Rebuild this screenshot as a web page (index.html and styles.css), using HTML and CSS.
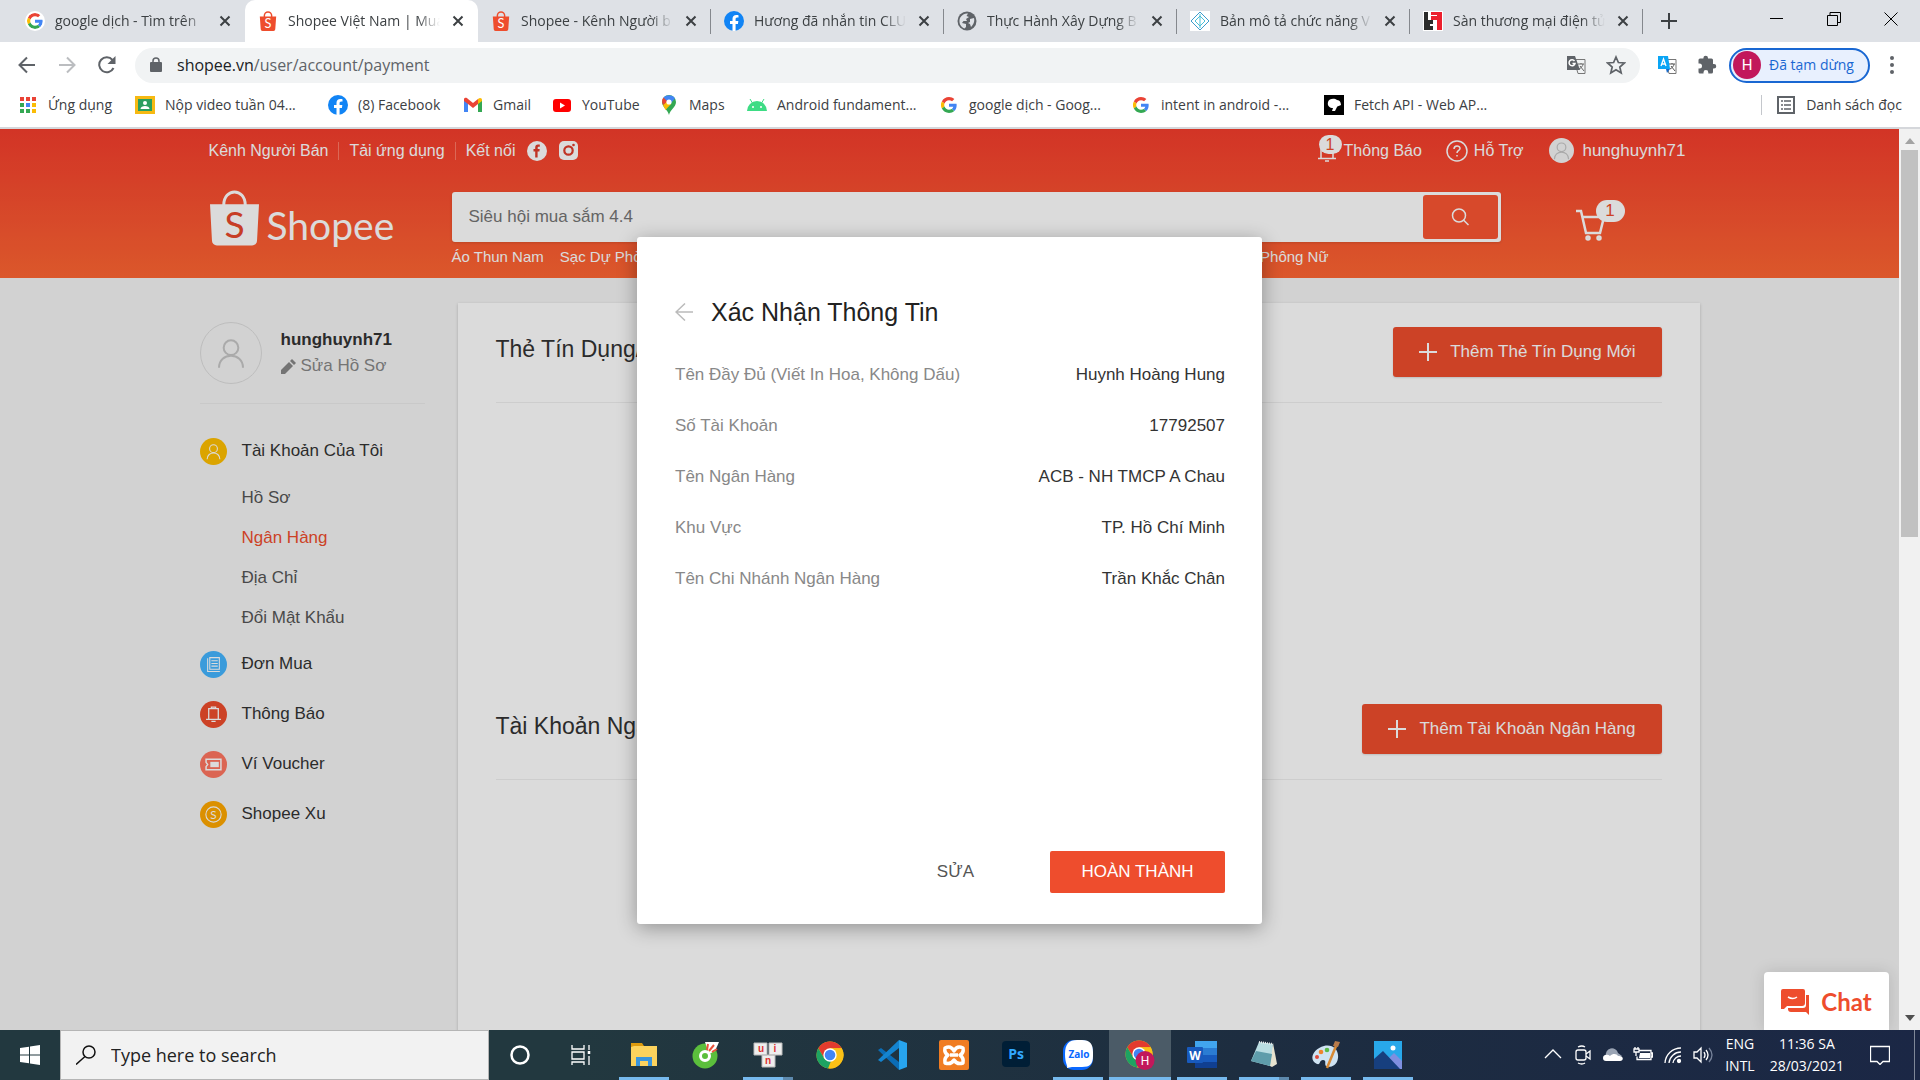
FILE: index.html
```html
<!DOCTYPE html>
<html lang="vi">
<head>
<meta charset="utf-8">
<title>Shopee Việt Nam</title>
<link rel="stylesheet" href="styles.css">
</head>
<body>
<svg class="sprite" aria-hidden="true">
  <symbol id="google" viewBox="0 0 48 48"><path fill="#ea4335" d="M24 9.5c3.5 0 6.700 1.200 9.200 3.600l6.900-6.900C35.900 2.400 30.500 0 24 0 14.600 0 6.500 5.400 2.600 13.200l8 6.200C12.400 13.700 17.700 9.500 24 9.500z"/><path fill="#4285f4" d="M47 24.500c0-1.600-.2-3.100-.4-4.500H24v9h12.900c-.6 3-2.200 5.500-4.800 7.200l7.700 6C44.400 38 47 31.900 47 24.500z"/><path fill="#fbbc05" d="M10.500 28.600A14.500 14.500 0 0 1 10.500 19.400l-8-6.200a24 24 0 0 0 0 21.600z"/><path fill="#34a853" d="M24 48c6.500 0 12-2.100 15.900-5.800l-7.700-6c-2.200 1.500-4.900 2.300-8.200 2.300-6.300 0-11.600-4.200-13.500-9.900l-8 6.200C6.500 42.600 14.600 48 24 48z"/></symbol>
  <symbol id="facebook" viewBox="0 0 24 24"><circle cx="12" cy="12" r="12" fill="#1184f5"/><path fill="#fff" d="M16.700 15.500l.5-3.500h-3.300V9.800c0-1 .5-1.900 2-1.900h1.500V5s-1.400-.2-2.700-.2c-2.700 0-4.500 1.600-4.500 4.600V12h-3v3.500h3V24h3.700v-8.500z"/></symbol>
  <symbol id="globe" viewBox="0 0 20 20"><circle cx="10" cy="10" r="9.500" fill="#5f6368"/><path fill="#dee1e6" d="M3 7c2-4 6-5 8-4.500L9.500 5 12 6l-3 2 1 2H6.500L5 12l4 1v3l-1.500 1.500C3 16 1.500 11 3 7zM13 8l4-1c1 4-1 7-3 9l-1-3-2-1 2-1z"/></symbol>
  <symbol id="diamond" viewBox="0 0 20 20"><path fill="#fff" d="M0 0h20v20H0z"/><g fill="none" stroke="#3d9ccc"><path d="M10 1l9 9-9 9-9-9z"/><path stroke="#48c0d8" d="M10 5l5 5-5 5-5-5zM10 3v14"/></g></symbol>
  <symbol id="hh" viewBox="0 0 20 20"><path fill="#fff" d="M0 0h20v20H0z"/><path fill="#2b2b2b" d="M1 1h4v8h5v4H7v2h3v4H1z"/><path fill="#ec1f2d" d="M8 1h11v18h-5V9H8V5h6V4H8z"/></symbol>
  <symbol id="close" viewBox="0 0 12 12"><path d="M1.500 1.500l9 9m0-9l-9 9" stroke="#3c4043" stroke-width="2"/></symbol>
  <symbol id="user" viewBox="0 0 24 24"><g fill="none" stroke="currentColor" stroke-width="1.500"><circle cx="12" cy="8" r="5.500"/><path d="M3 23c0-12 18-12 18 0"/></g></symbol>
  <symbol id="chrome" viewBox="0 0 28 28"><circle cx="14" cy="14" r="13.500" fill="#fbc116"/><path fill="#e33b2e" d="M2.300 7.200a13.500 13.500 0 0 1 23.400 0H14L8 17z"/><path fill="#1da362" d="M2.300 7.200l6 10.300L15 20l-3 7.400A13.500 13.500 0 0 1 2.300 7.200z"/><path fill="#fbc116" d="M14 7.300h11.700A13.500 13.500 0 0 1 12.500 27.400L19 17z"/><circle cx="14" cy="14" r="6.700" fill="#fff"/><circle cx="14" cy="14" r="5.300" fill="#4285f4"/></symbol>
</svg>

<header class="browser">
  <div class="tabstrip">
    <div class="tab"><svg class="fav round"><use href="#google"/></svg><span class="tab-title">google dịch - Tìm trên</span><button class="x" aria-label="Đóng"><svg><use href="#close"/></svg></button></div>
    <div class="tab active"><svg class="fav" viewBox="0 0 20 22"><path fill="none" stroke="#ee4d2d" stroke-width="1.600" d="M6 7V5a4 4 0 0 1 8 0v2"/><path fill="#ee4d2d" d="M1 6h18l-1 14a2 2 0 0 1-2 2H4a2 2 0 0 1-2-2z"/><text x="10" y="19" text-anchor="middle" font-size="14" font-family="Lato" fill="#fff">S</text></svg><span class="tab-title">Shopee Việt Nam | Mua</span><button class="x" aria-label="Đóng"><svg><use href="#close"/></svg></button></div>
    <div class="tab"><svg class="fav" viewBox="0 0 20 22"><path fill="none" stroke="#ee4d2d" stroke-width="1.600" d="M6 7V5a4 4 0 0 1 8 0v2"/><path fill="#ee4d2d" d="M1 6h18l-1 14a2 2 0 0 1-2 2H4a2 2 0 0 1-2-2z"/><text x="10" y="19" text-anchor="middle" font-size="14" font-family="Lato" fill="#fff">S</text></svg><span class="tab-title">Shopee - Kênh Người b</span><button class="x" aria-label="Đóng"><svg><use href="#close"/></svg></button></div>
    <div class="tab"><svg class="fav"><use href="#facebook"/></svg><span class="tab-title">Hương đã nhắn tin CLU</span><button class="x" aria-label="Đóng"><svg><use href="#close"/></svg></button></div>
    <div class="tab"><svg class="fav"><use href="#globe"/></svg><span class="tab-title">Thực Hành Xây Dựng B</span><button class="x" aria-label="Đóng"><svg><use href="#close"/></svg></button></div>
    <div class="tab"><svg class="fav"><use href="#diamond"/></svg><span class="tab-title">Bản mô tả chức năng V</span><button class="x" aria-label="Đóng"><svg><use href="#close"/></svg></button></div>
    <div class="tab"><svg class="fav"><use href="#hh"/></svg><span class="tab-title">Sàn thương mại điện tử</span><button class="x" aria-label="Đóng"><svg><use href="#close"/></svg></button></div>
    <button class="newtab" aria-label="Thẻ mới"><svg width="16" height="16"><path d="M8 0v16M0 8h16" stroke="#3c4043" stroke-width="2"/></svg></button>
    <div class="winctl">
      <button aria-label="Thu nhỏ"><svg width="14" height="14"><path d="M0 6.500h13" stroke="#000"/></svg></button>
      <button aria-label="Khôi phục"><svg width="14" height="14" fill="none" stroke="#000"><path d="M.5 3.500h10v10H.5zM3 3V.5h10.500v10H11"/></svg></button>
      <button aria-label="Đóng cửa sổ"><svg width="14" height="14"><path d="M.5.5l13 13m0-13l-13 13" stroke="#000"/></svg></button>
    </div>
  </div>
  <div class="toolbar">
    <button aria-label="Quay lại"><svg width="18" height="18" fill="none" stroke="#5f6368" stroke-width="2"><path d="M17 9H2M9 1.500L1.500 9 9 16.500"/></svg></button>
    <button aria-label="Tiến"><svg width="18" height="18" fill="none" stroke="#bbbdc0" stroke-width="2"><path d="M1 9h15M9 1.500L16.500 9 9 16.500"/></svg></button>
    <button aria-label="Tải lại"><svg width="18" height="18"><path fill="none" stroke="#5f6368" stroke-width="2" d="M15.500 12A7.500 7.500 0 1 1 14.500 4"/><path fill="#5f6368" d="M17.500 0v8h-8z"/></svg></button>
    <div class="omnibox">
      <svg width="12" height="16"><path fill="none" stroke="#5f6368" stroke-width="1.500" d="M3 7V4a3 3 0 0 1 6 0v3"/><rect y="5" width="12" height="10" rx="1" fill="#5f6368"/></svg>
      <span class="url"><b>shopee.vn</b>/user/account/payment</span>
      <svg class="i20" viewBox="0 0 20 20"><path fill="#f1f3f4" stroke="#777" d="M8 4.500h11v14h-7z"/><path fill="none" stroke="#666" d="M12 9h6M15 8v1M17 9c0 2-2 4-4 5M14 11l4 5"/><path fill="#5f6368" d="M1 1h8l5 14H1z"/><path fill="none" stroke="#fff" stroke-width="1.500" d="M8.500 6A3 3 0 1 0 9 8.500H6.500"/></svg>
      <svg width="20" height="20" viewBox="0 0 20 20"><path fill="none" stroke="#5f6368" stroke-width="1.700" d="M10 2l2.400 5.500 6 .5-4.600 4 1.400 6-5.200-3.200L4.800 18l1.400-6L1.600 8l6-.5z"/></svg>
    </div>
    <svg class="i20 ext-translate" viewBox="0 0 20 20"><path fill="#fff" stroke="#777" d="M8 4.500h11v14h-7z"/><path fill="none" stroke="#555" d="M12 9h6M15 8v1M17 9c0 2-2 4-4 5M14 11l4 5"/><path fill="#0aa5f5" d="M1 1h10l2 13H1z"/><path fill="#1668c8" d="M9 14h4l-3 4z"/><path fill="none" stroke="#fff" stroke-width="1.300" d="M4 11l2.500-7L9 11M5 9h3"/></svg>
    <svg width="20" height="20" viewBox="0 0 20 20" class="ext"><path fill="#5f6368" d="M17 9h-1V5a1.500 1.500 0 0 0-1.500-1.500H11V3a2.300 2.300 0 0 0-4.600 0v.5H3A1.500 1.500 0 0 0 1.500 5v3.500h1a2.500 2.500 0 0 1 0 5h-1V17A1.500 1.500 0 0 0 3 18.500h3.500v-1a2.400 2.400 0 0 1 4.800 0v1h3.200A1.500 1.500 0 0 0 16 17v-3.500h1A2.250 2.250 0 0 0 17 9z"/></svg>
    <button class="profile"><span class="ava">H</span>Đã tạm dừng</button>
    <svg width="6" height="20" class="dots" fill="#5f6368"><circle cx="3" cy="3" r="2"/><circle cx="3" cy="10" r="2"/><circle cx="3" cy="17" r="2"/></svg>
  </div>
  <nav class="bookmarks">
    <a href="#"><svg viewBox="0 0 20 20"><path fill="#ea4335" d="M2 2h4v4H2zM8 2h4v4H8zM14 2h4v4h-4z"/><path fill="#34a853" d="M2 8h4v4H2zM2 14h4v4H2z"/><path fill="#4285f4" d="M8 8h4v4H8z"/><path fill="#34a853" d="M8 14h4v4H8z"/><path fill="#fbbc05" d="M14 8h4v4h-4zM14 14h4v4h-4z"/></svg>Ứng dụng</a>
    <a href="#"><svg viewBox="0 0 20 20"><path fill="#f6b912" d="M0 1h20v18H0z"/><path fill="#2b9e5e" d="M3 4h14v12H3z"/><circle cx="10" cy="8" r="2" fill="#fff"/><path fill="#fff" d="M5.500 14c0-4 9-4 9 0z"/></svg>Nộp video tuần 04...</a>
    <a href="#"><svg><use href="#facebook"/></svg>(8) Facebook</a>
    <a href="#"><svg viewBox="0 0 20 20"><path fill="#4285f4" d="M1 5l4 3v9H1z"/><path fill="#34a853" d="M15 8l4-3v12h-4z"/><path fill="#ea4335" d="M1 4c1-2 3-1 4 0l5 4 5-4v5l-5 4-5-4-4-3z"/><path fill="#fbbc05" d="M15 4c2-2 4-1 4 1v1l-4 3z"/></svg>Gmail</a>
    <a href="#"><svg viewBox="0 0 20 20"><rect x="1" y="4" width="18" height="13" rx="3" fill="#f00"/><path fill="#fff" d="M8 7.500v6l5-3z"/></svg>YouTube</a>
    <a href="#"><svg viewBox="0 0 20 20"><path fill="#34a853" d="M10 20C9 15 3 12 3 7a7 7 0 0 1 14 0c0 5-6 8-7 13z"/><path fill="#fbbc05" d="M4 10l5-5 3 4-5.500 6z"/><path fill="#ea4335" d="M4.500 2.500L9 6l-5 4C2.500 7 3 4 4.500 2.500z"/><path fill="#4285f4" d="M4.500 2.500C8-1 14 0 16 3.500L12 8 8 6z"/><circle cx="10" cy="7" r="2.600" fill="#fff"/></svg>Maps</a>
    <a href="#"><svg viewBox="0 0 20 20"><path fill="#3ddc84" d="M0 16a10 10 0 0 1 20 0z"/><path stroke="#3ddc84" d="M3 4l3 5M17 4l-3 5"/><circle cx="6" cy="12" r="1" fill="#fff"/><circle cx="14" cy="12" r="1" fill="#fff"/></svg>Android fundament...</a>
    <a href="#"><svg class="sm"><use href="#google"/></svg>google dịch - Goog...</a>
    <a href="#"><svg class="sm"><use href="#google"/></svg>intent in android -...</a>
    <a href="#"><svg viewBox="0 0 20 20"><path d="M0 0h20v20H0z"/><path fill="#fff" d="M4 7c1-4 7-4 9-2 3 0 4 3 4 5-1 1-4 1-4 2l-2 4H8l1-3c-3 0-6-2-5-6z"/></svg>Fetch API - Web AP...</a>
    <a href="#" class="reading"><svg viewBox="0 0 20 20"><path fill="none" stroke="#5f6368" stroke-width="2" d="M2 2h16v16H2z"/><path stroke="#5f6368" stroke-width="1.500" d="M5 6h2M8 6h7M5 10h2M8 10h7M5 14h2M8 14h7"/></svg>Danh sách đọc</a>
  </nav>
</header>

<main class="viewport">
  <div class="page">
    <header class="head">
      <div class="wrap">
        <nav class="topnav">
          <a href="#">Kênh Người Bán</a><i></i><a href="#">Tải ứng dụng</a><i></i><span>Kết nối</span>
          <a href="#" class="soc" aria-label="Facebook"><svg width="20" height="20"><circle cx="10" cy="10" r="10" fill="#fff"/><path fill="#e03c2b" d="M8.200 16.500v-6H6.500V8h1.700V6.500c0-2 1-3 2.800-3h1.800v2.300h-1.200c-.7 0-.9.3-.9 1V8h2l-.3 2.500h-1.800v6z"/></svg></a>
          <a href="#" class="soc" aria-label="Instagram"><svg width="20" height="20"><rect width="19" height="19" rx="5" fill="#fff"/><circle cx="9.500" cy="9.500" r="4.200" fill="none" stroke="#e03c2b" stroke-width="2.200"/><circle cx="14.500" cy="4" r="1.300" fill="#e03c2b"/></svg></a>
          <a href="#" class="bell"><svg width="20" height="24" fill="none" stroke="#fff" stroke-width="1.500"><path d="M4 19V9a6 6 0 0 1 12 0v10M1 19.500h18M8 22h4"/></svg><b class="badge">1</b>Thông Báo</a>
          <a href="#" class="help"><svg width="22" height="22" fill="none" stroke="#fff" stroke-width="1.500"><circle cx="11" cy="11" r="10"/><path d="M8 9c0-4 6-4 6-.5 0 2-3 2-3 4.500M11 15v1.500"/></svg>Hỗ Trợ</a>
          <a href="#" class="me"><span class="mini"><svg><use href="#user"/></svg></span>hunghuynh71</a>
        </nav>
        <div class="searchrow">
          <a href="#" class="logo"><svg width="49" height="56" viewBox="0 0 50 56"><path fill="none" stroke="#fff" stroke-width="3" d="M14 15C14-3 36-3 36 15"/><path fill="#fff" d="M0 14h50l-2 37a5 5 0 0 1-5 5H7a5 5 0 0 1-5-5z"/><text x="25" y="48" text-anchor="middle" font-family="Lato" font-size="38" fill="#e8482c">S</text></svg><span>Shopee</span></a>
          <form class="search"><input type="text" placeholder="Siêu hội mua sắm 4.4" aria-label="Tìm kiếm"><button type="button" aria-label="Tìm"><svg width="18" height="18" fill="none" stroke="#fff" stroke-width="1.500"><circle cx="8" cy="7.500" r="6.500"/><path d="M12.500 12l5 5"/></svg></button></form>
          <a href="#" class="cart" aria-label="Giỏ hàng"><svg width="30" height="32" fill="none" stroke="#fff" stroke-width="2.500"><path d="M0 2h5l5 22h14l4-16H7"/><circle cx="12" cy="29" r="1.500"/><circle cx="23" cy="29" r="1.500"/></svg><b class="badge">1</b></a>
        </div>
        <nav class="hints"><a href="#">Áo Thun Nam</a><a href="#">Sạc Dự Phòng</a><a href="#" class="last">Phông Nữ</a></nav>
      </div>
    </header>
    <div class="wrap body">
      <aside class="side">
        <div class="who"><span class="avatar"><svg><use href="#user"/></svg></span><div><b>hunghuynh71</b><a href="#"><svg width="15" height="15" fill="#888"><path d="M0 15v-4l8-8 4 4-8 8zM9 2l2-2 4 4-2 2z"/></svg>Sửa Hồ Sơ</a></div></div>
        <nav class="menu">
          <a href="#"><span class="ic yellow"><svg><use href="#user"/></svg></span>Tài Khoản Của Tôi</a>
          <div class="sub"><a href="#">Hồ Sơ</a><a href="#" class="on">Ngân Hàng</a><a href="#">Địa Chỉ</a><a href="#">Đổi Mật Khẩu</a></div>
          <a href="#"><span class="ic sky"><svg viewBox="0 0 16 16" fill="none" stroke="#fff"><path d="M4.500 1.500h9v11h-9zM2.500 2v12.500H14M6 4.500h6M6 7h6M6 9.500h6"/></svg></span>Đơn Mua</a>
          <a href="#"><span class="ic red"><svg viewBox="0 0 16 16" fill="none" stroke="#fff" stroke-width="1.200"><path d="M3.500 12V2.500h9V12M1 12.500h14M6 14.500h4M6 2V1h4v1"/></svg></span>Thông Báo</a>
          <a href="#"><span class="ic pink"><svg viewBox="0 0 16 16"><path fill="none" stroke="#fff" stroke-width="1.400" d="M1 3h14v10H1v-3l1.500-2L1 6z"/><path fill="#fff" d="M5 5.500h8v5H5z"/></svg></span>Ví Voucher</a>
          <a href="#"><span class="ic gold"><svg viewBox="0 0 16 16"><circle cx="8" cy="8" r="7.200" fill="none" stroke="#fff"/><text x="8" y="12" text-anchor="middle" font-family="Lato" font-size="11" fill="#fff">S</text></svg></span>Shopee Xu</a>
        </nav>
      </aside>
      <section class="panel">
        <div class="block"><h2>Thẻ Tín Dụng/Ghi Nợ</h2><button class="add"><svg width="18" height="18"><path d="M9 0v18M0 9h18" stroke="#fff" stroke-width="2"/></svg>Thêm Thẻ Tín Dụng Mới</button></div>
        <div class="block"><h2>Tài Khoản Ngân Hàng</h2><button class="add"><svg width="18" height="18"><path d="M9 0v18M0 9h18" stroke="#fff" stroke-width="2"/></svg>Thêm Tài Khoản Ngân Hàng</button></div>
      </section>
    </div>
    <div class="overlay">
      <div class="modal" role="dialog" aria-labelledby="dlg">
        <div class="mtitle"><button aria-label="Trở lại"><svg width="18" height="18" fill="none" stroke="#bbb" stroke-width="1.500"><path d="M18 9H1M10 .5L1 9l9 8.500"/></svg></button><h1 id="dlg">Xác Nhận Thông Tin</h1></div>
        <dl>
          <div><dt>Tên Đầy Đủ (Viết In Hoa, Không Dấu)</dt><dd>Huynh Hoàng Hung</dd></div>
          <div><dt>Số Tài Khoản</dt><dd>17792507</dd></div>
          <div><dt>Tên Ngân Hàng</dt><dd>ACB - NH TMCP A Chau</dd></div>
          <div><dt>Khu Vực</dt><dd>TP. Hồ Chí Minh</dd></div>
          <div><dt>Tên Chi Nhánh Ngân Hàng</dt><dd>Trần Khắc Chân</dd></div>
        </dl>
        <div class="actions"><button class="edit">SỬA</button><button class="done">HOÀN THÀNH</button></div>
      </div>
    </div>
    <button class="chat"><svg width="28" height="26" viewBox="0 0 28 26"><path fill="#ee4d2d" d="M2 0h20a2 2 0 0 1 2 2v12a3 3 0 0 1-3 3H6l-3 3H0V2a2 2 0 0 1 2-2zM25 6h3v20l-3-3H10a3 3 0 0 1-3-3v-1h15a3 3 0 0 0 3-3z"/><path fill="none" stroke="#fff" stroke-width="1.500" d="M7 8q5 3 9 0"/></svg>Chat</button>
  </div>
  <div class="scroll"><svg width="10" height="6"><path fill="#a3a3a3" d="M0 6l5-6 5 6z"/></svg><span></span><svg width="10" height="6"><path fill="#505050" d="M0 0l5 6 5-6z"/></svg></div>
</main>

<footer class="taskbar">
  <button class="start" aria-label="Start"><svg width="20" height="20" fill="#fff"><path d="M0 3l9-1.300V9.500H0zM10 1.500L20 0v9.500H10zM0 10.500h9v7.800L0 17zM10 10.500h10V20l-10-1.500z"/></svg></button>
  <label class="tsearch"><svg width="20" height="20" fill="none" stroke="#111" stroke-width="1.500"><circle cx="13" cy="7" r="6"/><path d="M9 11.500L0 19.500"/></svg><input type="text" placeholder="Type here to search" aria-label="Type here to search"></label>
  <div class="apps">
    <button aria-label="Cortana"><svg viewBox="0 0 30 30"><circle cx="15" cy="15" r="8.500" fill="none" stroke="#fff" stroke-width="2.500"/></svg></button>
    <button aria-label="Task View"><svg viewBox="0 0 30 30" fill="none" stroke="#fff" stroke-width="1.300"><path d="M5 5v4h12V5M5 12h12v7H5zM5 25v-3h12v3M22 5v5M22 16v9"/><path stroke-width="2.500" d="M22 11v3"/></svg></button>
    <button class="run" aria-label="File Explorer"><svg viewBox="0 0 30 30"><path fill="#dd9a0e" d="M2 3h11l2 3v5H2z"/><path fill="#fdd35d" d="M2 7l3-1h23v20H2z"/><path fill="#3b96dd" d="M7 26V17h16v9h-4v-5h-8v5z"/></svg></button>
    <button aria-label="Cốc Cốc"><svg viewBox="0 0 30 30"><circle cx="14" cy="16" r="12.500" fill="#5bbf3c"/><circle cx="14" cy="16" r="4.500" fill="none" stroke="#fff" stroke-width="3"/><path fill="#fff" d="M14 2h14l-4 9-6 3z"/><path stroke="#e9533b" stroke-width="2" d="M17 4l-1 6M23 5l-5 6M26 9l-5 3"/></svg></button>
    <button class="run multi" aria-label="UniKey"><svg viewBox="0 0 30 30"><g fill="#eee" stroke="#bbb"><path d="M1 3h13v12H1zM16 3h13v12H16zM9 15h13v12H9z"/></g><g font-family="Liberation Sans" font-weight="700" font-size="10" fill="#d33" text-anchor="middle"><text x="8" y="12">u</text><text x="22" y="12">i</text><text x="15" y="24">n</text></g></svg></button>
    <button aria-label="Chrome"><svg viewBox="-1 -1 30 30"><use href="#chrome" width="28" height="28"/></svg></button>
    <button aria-label="VS Code"><svg viewBox="0 0 30 30"><path fill="#0b6cb5" d="M1 10l3-2 18 14v8z"/><path fill="#1484d0" d="M1 20l3 2L22 8V0z"/><path fill="#27a4ee" d="M22 0l8 3v24l-8 3z"/></svg></button>
    <button aria-label="XAMPP"><svg viewBox="0 0 30 30"><rect width="30" height="30" rx="2" fill="#f07c22"/><path fill="none" stroke="#fff" stroke-width="3.500" stroke-linejoin="round" d="M6 8q6-3 9 3 3-6 9-3 1 5-3 7 4 3 3 8-6 2-9-3-3 5-9 3-1-5 3-8-4-2-3-7zM11 15h8"/></svg></button>
    <button aria-label="Photoshop"><svg viewBox="0 0 30 30"><rect x="1" y="1" width="28" height="26" rx="4" fill="#001e36"/><text x="15" y="19" text-anchor="middle" font-family="Open Sans" font-weight="700" font-size="14" fill="#31a8ff">Ps</text></svg></button>
    <button class="run" aria-label="Zalo"><svg viewBox="0 0 30 30"><rect width="30" height="30" rx="11" fill="#0a68ff"/><path fill="#fff" d="M14 0h5c8 0 11 4 11 12v4c0 8-3 11-11 11H9l-5 1c1-3-2-4-2-14C2 4 6 0 14 0z"/><text x="16" y="18" text-anchor="middle" font-family="Open Sans" font-weight="700" font-size="10" fill="#0a68ff">Zalo</text></svg></button>
    <button class="run cur" aria-label="Chrome H"><svg viewBox="0 0 30 30"><use href="#chrome" width="28" height="28"/><circle cx="20" cy="20.500" r="9.500" fill="#c2185b"/><text x="20" y="25" text-anchor="middle" font-family="Roboto" font-size="12" fill="#fff">H</text></svg></button>
    <button class="run" aria-label="Word"><svg viewBox="0 0 30 30"><path fill="#41a5ee" d="M8 1h22v7H8z"/><path fill="#2b7cd3" d="M8 8h22v7H8z"/><path fill="#185abd" d="M8 15h22v7H8z"/><path fill="#103f91" d="M8 22h22v6H8z"/><rect y="7" width="16" height="16" rx="1" fill="#185abd"/><text x="8" y="20" text-anchor="middle" font-family="Open Sans" font-weight="700" font-size="12" fill="#fff">W</text></svg></button>
    <button class="run multi" aria-label="Notepad"><svg viewBox="0 0 30 30"><path fill="#e8e3cf" d="M24 3l4 21-5 3-4-2z"/><path fill="#b9dde2" d="M10 2l14 2-3 22L2 21z"/><path fill="#5f9dab" d="M7 11l16 3-2 12L2 21z"/><path stroke="#eee" stroke-width="2" stroke-dasharray="1 1" d="M10 2l14 2"/></svg></button>
    <button class="run" aria-label="Paint"><svg viewBox="0 0 30 30"><path fill="#cfe3f2" d="M13 6c9-2 15 4 14 12-1 9-10 10-12 8s1-6-3-6-2 5-6 4C-3 20 2 9 13 6z"/><circle cx="6" cy="17" r="2" fill="#e04a3a"/><circle cx="10" cy="12" r="2.300" fill="#f0842c"/><circle cx="16" cy="10" r="2.300" fill="#5cba47"/><path stroke="#d88a35" stroke-width="2.500" d="M16 28L25 6"/><path fill="#b87b4b" d="M22 6l2-5 5 1-2 5z"/></svg></button>
    <button class="run" aria-label="Photos"><svg viewBox="0 0 30 30"><path fill="#28a8ea" d="M1 1h28v28H1z"/><path fill="#7f8fe0" d="M12 22l9-9 8 8v8H12z"/><path fill="#173f7e" d="M1 19l9-8 17 18H1z"/><circle cx="20" cy="8" r="2.500" fill="#fff"/></svg></button>
  </div>
  <div class="tray">
    <svg viewBox="0 0 20 20"><path d="M2 13l8-8 8 8"/></svg>
    <svg viewBox="0 0 20 20"><rect x="3" y="5" width="10" height="10" rx="2"/><path d="M13 9l4-3v8l-4-3M5 2q4-2 7 0M5 18q4 2 7 0"/></svg>
    <svg viewBox="0 0 20 20"><path fill="#9aa4b4" stroke="none" d="M3 11a6 6 0 0 1 12-3l4 3-16 2z"/><path fill="#fff" stroke="none" d="M0 13c0-4 5-4 7-2 3-3 7-2 8 0 6-1 6 5 2 5H3c-2 0-3-1-3-3z"/></svg>
    <svg viewBox="0 0 20 20"><path d="M6 5.500h12v9H4v-3M18 8h1.500v4H18M1 4h5v3H1zM3 7v4M2 2v2M5 2v2"/><path fill="#fff" stroke="none" d="M7 8h10v5H6z"/></svg>
    <svg viewBox="0 0 20 20"><path d="M2 18A16 16 0 0 1 18 3M6 18A12 12 0 0 1 18 7M10 18a8 8 0 0 1 8-7"/><circle cx="16" cy="16" r="1.500" fill="#fff"/></svg>
    <svg viewBox="0 0 20 20"><path d="M1 7h3l4-4v14l-4-4H1zM11 7q2 3 0 6M13 5q4 5 0 10"/><path stroke="#77839a" d="M16 3q6 7 0 14"/></svg>
    <p class="lang">ENG<br>INTL</p><p class="clock">11:36 SA<br>28/03/2021</p>
    <svg class="note" viewBox="0 0 20 20"><path d="M.5 1.500h19v15H13l-3 3-3-3H.5z"/></svg><i></i>
  </div>
</footer>
</body>
</html>
```
FILE: styles.css
```css
* { box-sizing: border-box; }
html, body { height: 100%; }
body { margin: 0; display: flex; flex-direction: column; overflow: hidden; font: 17px/20px "Liberation Sans", Arial, sans-serif; color: #333; }
button { border: 0; padding: 0; background: none; font: inherit; color: inherit; }
a { color: inherit; text-decoration: none; }
svg { display: block; flex: none; }
input { border: 0; outline: 0; font: inherit; min-width: 0; }
.sprite { position: absolute; width: 0; height: 0; }

/* Browser chrome */
.browser { flex: none; font: 14px/20px "Open Sans", "Noto Sans", sans-serif; color: #3c4043; background: #fff; border-bottom: 2px solid #d5d7db; }
.tabstrip { display: flex; height: 42px; background: #dee1e6; padding-left: 12px; }
.tab { flex: 0 1 233px; min-width: 0; display: flex; align-items: center; padding: 0 14px 0 13px; position: relative; }
.tab::after { content: ""; position: absolute; right: 0; top: 9px; height: 25px; width: 1px; background: #85888d; }
.tab:first-child::after, .tab.active::after { display: none; }
.tab.active { background: #fff; border-radius: 10px 10px 0 0; }
.fav { width: 20px; height: 20px; margin-right: 10px; }
.round { background: #fff; border-radius: 50%; padding: 2px; }
.tab-title { flex: 1; overflow: hidden; white-space: nowrap; mask-image: linear-gradient(90deg, #000 85%, transparent); }
.x { margin-left: 12px; }
.x svg { width: 12px; height: 12px; }
.newtab { padding: 0 18px; }
.winctl { margin-left: auto; display: flex; align-items: flex-start; padding: 12px 22px 0 0; gap: 43px; }
.toolbar { display: flex; align-items: center; height: 46px; padding: 0 25px 0 18px; }
.toolbar > button { margin-right: 22px; }
.toolbar > button:nth-child(3) { margin-right: 19px; }
.omnibox { flex: 1; display: flex; align-items: center; height: 35px; border-radius: 18px; background: #f1f3f4; padding: 0 14px 0 15px; gap: 20px; }
.url { flex: 1; font-size: 16px; color: #5f6368; margin-left: -5px; }
.url b { font-weight: 400; color: #202124; }
.i20 { width: 20px; height: 20px; }
.ext-translate { margin-left: 17px; }
.ext { margin-left: 20px; }
.toolbar > .profile { display: flex; align-items: center; height: 35px; width: 141px; margin: 0 19px 0 12px; padding-left: 2px; gap: 8px; border: 2px solid #1967d2; border-radius: 18px; background: #e8f0fe; color: #1967d2; white-space: nowrap; }
.ava { width: 28px; height: 28px; border-radius: 50%; background: #c2185b; color: #fff; font: 15px/28px Roboto, sans-serif; }
.bookmarks { display: grid; grid-template-columns: 117px 193px 135px 89px 107px 88px 192px 192px 193px 1fr auto; height: 39px; align-items: center; padding: 0 18px 5px; white-space: nowrap; }
.bookmarks a { display: flex; align-items: center; gap: 10px; }
.bookmarks svg { width: 20px; height: 20px; }
.bookmarks .sm { padding: 2px; }
.bookmarks .reading { border-left: 1px solid #c4c7cc; padding-left: 14px; }

/* Web page */
.viewport { flex: 1; display: flex; min-height: 0; }
.page { flex: 1; position: relative; overflow: hidden; background: #f5f5f5; }
.wrap { max-width: 1500px; margin: 0 auto; }
.head { background: linear-gradient(#f53d2d, #ff6633); color: #fff; height: 149px; }
.topnav { display: flex; align-items: center; height: 43px; padding: 0 14px 0 9px; font-size: 16px; }
.topnav i { width: 1px; height: 18px; margin: 0 10px; background: #ff7a66; }
.soc { margin-left: 12px; }
.bell { margin-left: auto; display: flex; align-items: center; gap: 7px; position: relative; }
.badge { position: absolute; background: #fff; color: #ee4d2d; font-weight: 400; text-align: center; border-radius: 12px; }
.bell .badge { left: 2px; top: -4px; width: 23px; line-height: 19px; }
.help { display: flex; align-items: center; gap: 6px; margin-left: 24px; }
.me { display: flex; align-items: center; gap: 8px; margin-left: 26px; font-size: 17px; }
.mini { width: 25px; height: 25px; border-radius: 50%; background: #f5f5f5; color: #c6c6c6; padding: 3px; }
.mini svg { width: 19px; height: 19px; }
.searchrow { display: flex; height: 70px; padding: 18px 74px 0 10px; }
.logo { display: flex; width: 242px; gap: 8px; font: 39px/70px Lato, sans-serif; }
.search { flex: 1; display: flex; height: 50px; margin-top: 2px; padding: 3px; background: #fff; border-radius: 3px; box-shadow: 0 1px 3px #0002; }
.search input { flex: 1; background: none; padding: 0 14px; }
.search input::placeholder { color: #757575; }
.search button { width: 75px; background: #fb5533; border-radius: 3px; display: grid; place-items: center; }
.cart { position: relative; margin: 19px 20px 0 75px; }
.cart .badge { left: 20px; top: -9px; width: 29px; line-height: 22px; }
.hints { display: flex; gap: 16px; margin: 5px 371px 0 252px; font-size: 15px; }
.hints .last { margin-left: auto; }
.body { display: flex; min-height: 752px; }
.side { width: 225px; padding-top: 44px; }
.who { display: flex; align-items: center; gap: 19px; padding-bottom: 19px; border-bottom: 1px solid #eaeaea; }
.avatar { width: 62px; height: 62px; border: 1px solid #ddd; border-radius: 50%; display: grid; place-items: center; color: #c6c6c6; }
.avatar svg { width: 32px; height: 32px; }
.who b { display: block; margin-bottom: 6px; }
.who a { display: flex; align-items: center; gap: 5px; color: #888; }
.menu { padding-top: 22px; white-space: nowrap; }
.menu > a { display: flex; align-items: center; height: 50px; gap: 15px; }
.ic { width: 27px; height: 27px; border-radius: 50%; color: #fff; display: grid; place-items: center; }
.ic svg { width: 17px; height: 17px; }
.yellow { background: #ffbf00; } .sky { background: #44b5ff; } .red { background: #ee4d2d; } .pink { background: #ff7661; } .gold { background: #ffa800; }
.sub { padding: 2px 0 1px 42px; color: #555; }
.sub a { display: block; line-height: 40px; }
.sub .on { color: #ee4d2d; }
.panel { flex: 1; margin: 25px 0 0 33px; padding: 0 38px; background: #fff; box-shadow: 0 1px 3px #0003; }
.block { display: grid; grid-template: 99px 278px / 1fr auto; align-items: center; }
.block::after { content: ""; grid-column: 1 / -1; align-self: start; height: 1px; background: #efefef; }
h1, h2 { margin: 0; font-weight: 400; }
h2 { font-size: 23px; line-height: 26px; padding-bottom: 8px; }
.add { display: flex; align-items: center; gap: 13px; height: 50px; margin-bottom: 2px; padding: 0 26px; background: #ee4d2d; color: #fff; border-radius: 3px; box-shadow: 0 1px 2px #0002; }
.overlay { position: absolute; inset: 0; display: grid; place-items: center; padding-top: 2px; background: rgba(0,0,0,.14); }
.modal { width: 625px; min-height: 687px; padding: 57px 37px 31px 38px; display: flex; flex-direction: column; background: #fff; border-radius: 3px; box-shadow: 0 4px 20px #0005; }
.mtitle { display: flex; align-items: center; gap: 18px; height: 36px; color: #222; }
h1 { font-size: 25px; line-height: 36px; }
dl { margin: 19px 0 0; }
dl div { display: flex; justify-content: space-between; line-height: 51px; }
dt { color: #888; } dd { margin: 0; }
.actions { display: flex; justify-content: flex-end; align-items: center; gap: 76px; margin-top: auto; color: #555; }
.done { width: 175px; height: 42px; background: #ee4d2d; color: #fff; border-radius: 2px; }
.chat { position: absolute; right: 10px; bottom: 0; display: flex; align-items: center; justify-content: center; gap: 12px; width: 125px; height: 58px; padding-top: 2px; background: #fff; color: #ee4d2d; border-radius: 4px 4px 0 0; font: 700 24px/30px Lato, sans-serif; box-shadow: 0 0 16px #0002; }
.scroll { width: 21px; background: #f1f1f1; display: flex; flex-direction: column; align-items: center; padding: 9px 0; }
.scroll span { width: 17px; height: 387px; margin: 6px 0 auto; background: #c1c1c1; }

/* Taskbar */
.taskbar { flex: none; height: 50px; display: flex; background: linear-gradient(90deg, #22383f 30%, #1d2d40 65%, #1b2745); color: #fff; font-family: "Open Sans", "Noto Sans", sans-serif; }
.start { width: 60px; display: grid; place-items: center; }
.tsearch { width: 429px; display: flex; align-items: center; padding-left: 15px; gap: 13px; background: #f2f2f2; border: 1px solid #b5b5b5; }
.tsearch input { background: none; flex: 1; font-size: 18px; }
.tsearch input::placeholder { color: #222; }
.apps { display: flex; }
.apps button { width: 62px; position: relative; display: grid; place-items: center; }
.apps svg { width: 30px; height: 30px; }
.apps .run::after { content: ""; position: absolute; left: 6px; right: 6px; bottom: 0; height: 3px; background: #76b9ed; }
.apps .multi::after { background: linear-gradient(90deg, #76b9ed 80%, #5d89ad 80%); }
.apps .cur { background: #4b5b67; }
.apps .cur::after { left: 0; right: 0; }
.tray { margin-left: auto; display: flex; align-items: center; gap: 10px; padding-right: 5px; }
.tray svg { width: 20px; height: 20px; fill: none; stroke: #fff; stroke-width: 1.300; }
.tray p { margin: 0; font-size: 14px; line-height: 22px; text-align: center; }
.tray .lang { margin-left: 2px; }
.tray .clock { margin: 0 16px 0 5px; }
.tray i { width: 1px; height: 50px; margin-left: 14px; background: #7f8898; }
```
